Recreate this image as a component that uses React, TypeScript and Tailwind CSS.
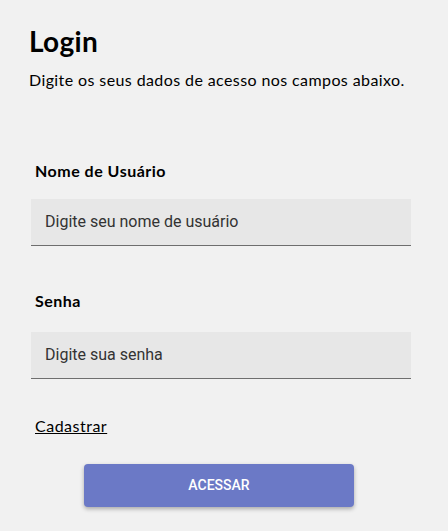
import React from "react";

export default function App() {
  const gothic = { fontFamily: '"Lato", "Open Sans", sans-serif' };
  return (
    <div className="min-h-[531px] w-full bg-[#f1f1f1] px-[29px] pt-[24px]" style={gothic}>
      <h1 className="text-[28px] font-bold leading-[34px] tracking-[0.3px] text-black">Login</h1>
      <p className="mt-[12px] text-[16px] leading-[20px] tracking-[0.4px] text-black">
        Digite os seus dados de acesso nos campos abaixo.
      </p>
      <form className="mt-[71px] flex flex-col" onSubmit={(e) => e.preventDefault()}>
        <label className="ml-[6px] text-[16px] font-bold leading-[20px] tracking-[0.5px] text-black">Nome de Usuário</label>
        <div className="ml-[2px] mt-[18px] mr-[8px] h-[47px] border-b border-[#6e6e6e] bg-[#e7e7e7] flex items-center px-[14px]">
          <input
            className="w-full bg-transparent text-[16px] text-[#333] placeholder:text-[#333] outline-none"
            style={{ fontFamily: "Roboto, sans-serif" }}
            placeholder="Digite seu nome de usuário"
          />
        </div>
        <label className="ml-[6px] mt-[45px] text-[16px] font-bold leading-[20px] tracking-[0.5px] text-black">Senha</label>
        <div className="ml-[2px] mt-[21px] mr-[8px] h-[47px] border-b border-[#6e6e6e] bg-[#e7e7e7] flex items-center px-[14px]">
          <input
            type="password"
            className="w-full bg-transparent text-[16px] text-[#333] placeholder:text-[#333] outline-none"
            style={{ fontFamily: "Roboto, sans-serif" }}
            placeholder="Digite sua senha"
          />
        </div>
        <a href="#" className="ml-[6px] mt-[37px] self-start text-[16px] leading-[20px] tracking-[0.5px] text-black underline">
          Cadastrar
        </a>
        <button
          type="submit"
          className="mt-[28px] ml-[55px] h-[43px] w-[270px] rounded-[4px] bg-[#6b79c6] text-[14px] font-medium text-white shadow-[0_2px_4px_rgba(0,0,0,0.3)]"
          style={{ fontFamily: "Roboto, sans-serif" }}
        >
          ACESSAR
        </button>
      </form>
    </div>
  );
}
